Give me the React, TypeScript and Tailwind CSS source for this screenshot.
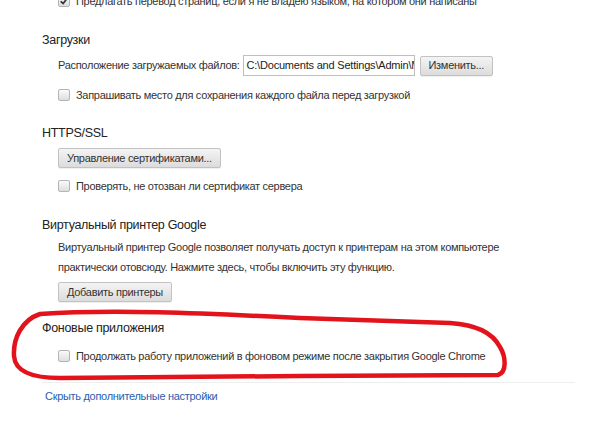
import React from 'react';

const font = { fontFamily: '"Liberation Sans", Arial, sans-serif' };

function Checkbox({ checked = false }: { checked?: boolean }) {
  return (
    <span className="relative flex h-[12px] w-[12px] shrink-0 items-center justify-center rounded-[2px] border border-[#b5b5b5] bg-gradient-to-b from-[#fafafa] to-[#dedede]">
      {checked && (
        <svg viewBox="0 0 12 12" className="h-[10px] w-[10px]">
          <path d="M2 6.5 L5 9 L10 2.5" fill="none" stroke="#333" strokeWidth="2" />
        </svg>
      )}
    </span>
  );
}

function CheckRow({ label, checked }: { label: string; checked?: boolean }) {
  return (
    <div className="flex h-[20px] items-center gap-[6px] pl-[16px]">
      <Checkbox checked={checked} />
      <span className="whitespace-nowrap text-[11px] tracking-[-0.3px] text-[#333]">{label}</span>
    </div>
  );
}

function Button({ children }: { children: React.ReactNode }) {
  return (
    <button className="flex h-[20px] items-center whitespace-nowrap rounded-[2px] border border-[#c2c2c2] bg-gradient-to-b from-[#f4f4f4] to-[#dcdcdc] px-[8px] text-[11px] tracking-[-0.3px] text-[#333] shadow-[0_1px_0_rgba(0,0,0,0.06)]">
      {children}
    </button>
  );
}

function Heading({ children, className = '' }: { children: React.ReactNode; className?: string }) {
  return (
    <div className={`flex h-[20px] items-center text-[12.5px] tracking-[-0.3px] text-[#222] ${className}`}>
      {children}
    </div>
  );
}

export default function App() {
  return (
    <div className="relative h-[421px] w-[600px] overflow-hidden bg-white" style={font}>
      <div className="pl-[42px]">
        {/* Перевод */}
        <div className="-mt-[9px]">
          <CheckRow checked label="Предлагать перевод страниц, если я не владею языком, на котором они написаны" />
        </div>

        {/* Загрузки */}
        <Heading className="mt-[19px]">Загрузки</Heading>
        <div className="mt-[5px] flex h-[21px] items-center pl-[16px]">
          <span className="whitespace-nowrap text-[11px] tracking-[-0.3px] text-[#333]">Расположение загружаемых файлов:</span>
          <div className="ml-[3px] flex h-[21px] w-[172px] shrink-0 items-center overflow-hidden border border-[#bfbfbf] bg-white pl-[3px]">
            <span className="whitespace-nowrap text-[11px] tracking-[-0.2px] text-[#222]">C:\Documents and Settings\Admin\Мои</span>
          </div>
          <div className="ml-[5px]">
            <Button>Изменить...</Button>
          </div>
        </div>
        <div className="mt-[9px]">
          <CheckRow label="Запрашивать место для сохранения каждого файла перед загрузкой" />
        </div>

        {/* HTTPS/SSL */}
        <Heading className="mt-[18px]">HTTPS/SSL</Heading>
        <div className="mt-[5px] pl-[16px]">
          <Button>Управление сертификатами...</Button>
        </div>
        <div className="mt-[8px]">
          <CheckRow label="Проверять, не отозван ли сертификат сервера" />
        </div>

        {/* Виртуальный принтер */}
        <Heading className="mt-[19px]">Виртуальный принтер Google</Heading>
        <p className="mt-[2px] whitespace-nowrap pl-[16px] text-[11px] leading-[20px] tracking-[-0.3px] text-[#333]">
          Виртуальный принтер Google позволяет получать доступ к принтерам на этом компьютере
          <br />
          практически отовсюду. Нажмите здесь, чтобы включить эту функцию.
        </p>
        <div className="mt-[5px] pl-[16px]">
          <Button>Добавить принтеры</Button>
        </div>

        {/* Фоновые приложения */}
        <Heading className="mt-[16px]">Фоновые приложения</Heading>
        <div className="mt-[8px]">
          <CheckRow label="Продолжать работу приложений в фоновом режиме после закрытия Google Chrome" />
        </div>

        <div className="mt-[16px] h-px w-[533px] bg-[#eeeeee]" />

        <div className="ml-[3px] mt-[3px] flex h-[20px] items-center">
          <a className="text-[11px] tracking-[-0.3px] text-[#2a5db0]">Скрыть дополнительные настройки</a>
        </div>
      </div>

      {/* red marker loop */}
      <svg className="pointer-events-none absolute left-0 top-0" width="600" height="421">
        <path
          d="M40 314 C22 320 13 338 14 356 C15 370 30 378 60 378 L300 376 L498 375 C507 372 506 357 500 347 C492 332 476 325 450 323 L300 318 C200 313 110 309 40 314 Z"
          fill="none"
          stroke="#e3131b"
          strokeWidth="4.5"
          strokeLinejoin="round"
        />
      </svg>
    </div>
  );
}
